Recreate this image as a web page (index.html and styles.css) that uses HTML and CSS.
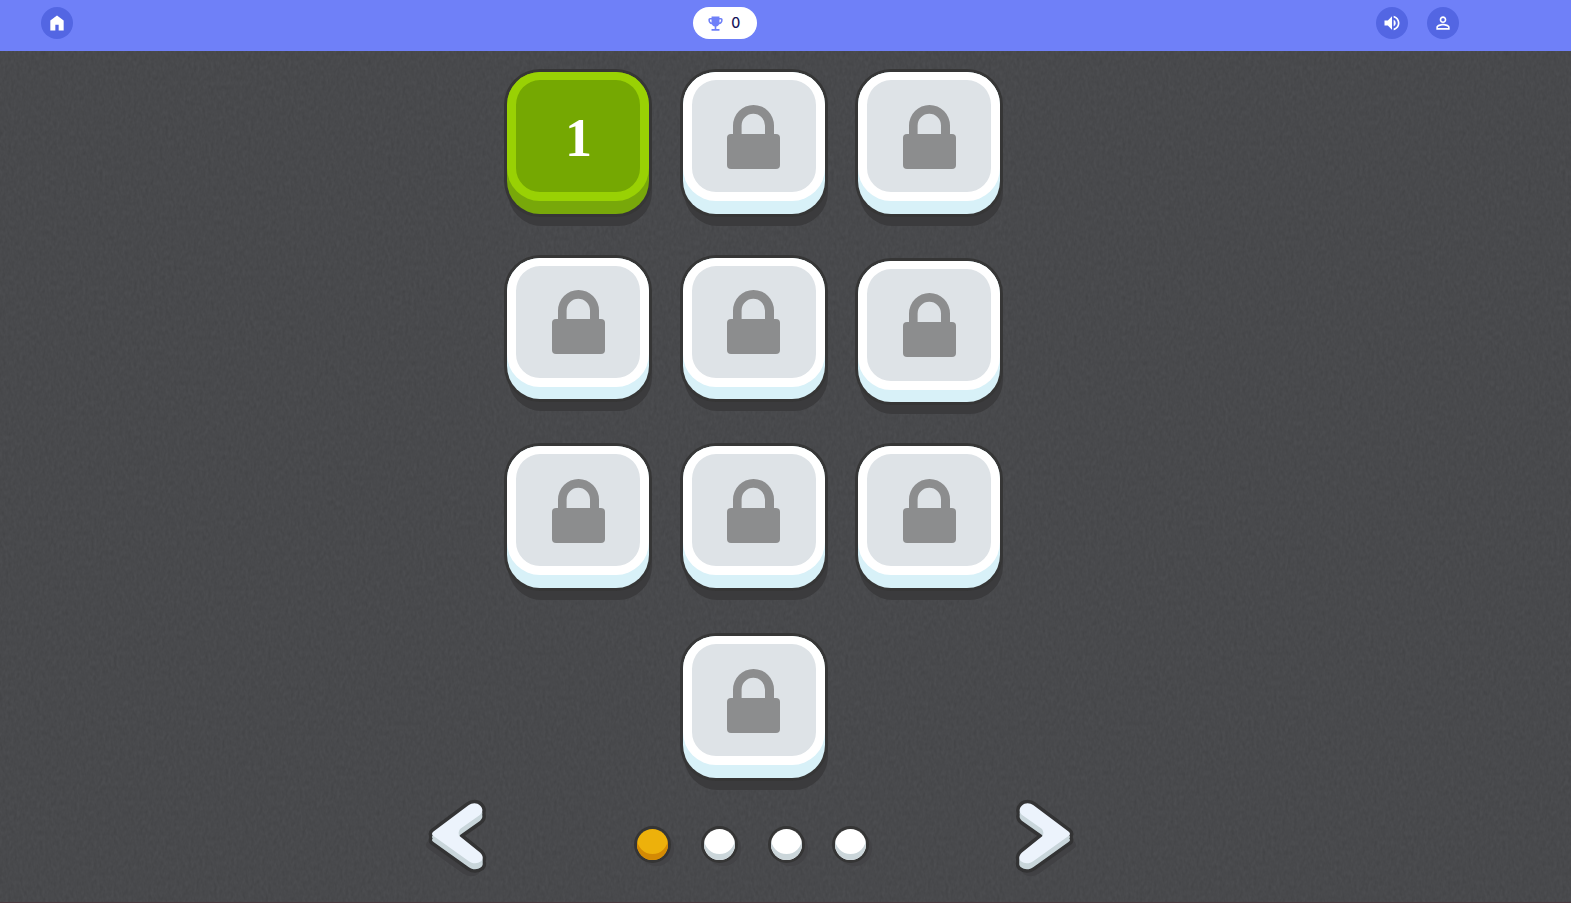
FILE: index.html
```
<!DOCTYPE html>
<html lang="en">
<head>
<meta charset="utf-8">
<title>Levels</title>
<link rel="stylesheet" href="styles.css">
</head>
<body>
<svg class="defs" width="0" height="0" aria-hidden="true">
  <symbol id="lock" viewBox="0 0 53 64">
    <path d="M6 33V20.500a20.500 20.500 0 0 1 41 0V33h-9V20.500a11.700 11.700 0 0 0-23.400 0V33z"/>
    <rect y="29" width="53" height="35" rx="4"/>
  </symbol>
  <path id="chevron" d="M7.500 33.500 42.500 7.300C46 4.700 51 4.500 54 7.500C57.500 11 57 14.500 53.500 17.300L34 31Q31.500 35 33.500 38L54 54.500C57.500 58 57.500 61 55 63.300C51.500 66 46.500 66 42.500 63L7.500 38Q4.500 36 7.500 33.500Z"/>
  <g id="arrow">
    <use class="arrow-shade" href="#chevron" x="-4" y="11"/>
    <use class="arrow-line" href="#chevron"/>
    <use class="arrow-line" href="#chevron" y="6"/>
    <use class="arrow-side" href="#chevron" y="6"/>
    <use class="arrow-side" href="#chevron" y="3"/>
    <use class="arrow-face" href="#chevron"/>
  </g>
</svg>
<header class="topbar">
  <button class="round" aria-label="Home"><svg viewBox="0 0 24 24"><path d="M4 21V9l8-6 8 6v12h-6v-7h-4v7z"/></svg></button>
  <div class="score"><svg viewBox="0 0 24 24"><path d="M7 21v-2h4v-3.100q-1.225-.275-2.187-1.038T7.400 12.950q-1.875-.225-3.137-1.638T3 8V7q0-.825.588-1.412T5 5h2V3h10v2h2q.825 0 1.413.588T21 7v1q0 1.900-1.263 3.313T16.600 12.950q-.45 1.150-1.412 1.913T13 15.900V19h4v2zm0-10.200V7H5v1q0 .95.550 1.713T7 10.800m10 0q.9-.325 1.450-1.088T19 8V7h-2z"/></svg><span>0</span></div>
  <div class="actions">
    <button class="round" aria-label="Sound"><svg viewBox="0 0 24 24"><path d="M3 9v6h4l5 5V4L7 9zm13.500 3A4.500 4.500 0 0 0 14 7.970v8.050c1.480-.730 2.500-2.250 2.500-4.020M14 3.230v2.060c2.890.860 5 3.540 5 6.710s-2.110 5.850-5 6.710v2.060c4.010-.910 7-4.490 7-8.770s-2.990-7.860-7-8.770"/></svg></button>
    <button class="round" aria-label="Profile"><svg viewBox="0 0 24 24"><path d="M12 5.900a2.100 2.100 0 1 1 0 4.200 2.100 2.100 0 0 1 0-4.200m0 9c2.970 0 6.100 1.460 6.100 2.100v1.100H5.900V17c0-.640 3.130-2.100 6.100-2.100M12 4C9.790 4 8 5.790 8 8s1.790 4 4 4 4-1.790 4-4-1.790-4-4-4m0 9c-2.670 0-8 1.340-8 4v3h16v-3c0-2.660-5.330-4-8-4"/></svg></button>
  </div>
</header>
<main class="board">
  <svg class="grain" aria-hidden="true"><filter id="noise" x="0" y="0" width="100%" height="100%"><feTurbulence type="fractalNoise" baseFrequency=".35 .2" numOctaves="2" seed="4"/><feColorMatrix values="0 0 0 0 0  0 0 0 0 0  0 0 0 0 0  .11 .11 0 0 -.06"/></filter><rect width="100%" height="100%" filter="url(#noise)"/></svg>
  <div class="levels">
    <button class="tile open"><span class="face">1</span></button>
    <button class="tile"><span class="face"><svg><use href="#lock"/></svg></span></button>
    <button class="tile"><span class="face"><svg><use href="#lock"/></svg></span></button>
    <button class="tile"><span class="face"><svg><use href="#lock"/></svg></span></button>
    <button class="tile"><span class="face"><svg><use href="#lock"/></svg></span></button>
    <button class="tile lower"><span class="face"><svg><use href="#lock"/></svg></span></button>
    <button class="tile"><span class="face"><svg><use href="#lock"/></svg></span></button>
    <button class="tile"><span class="face"><svg><use href="#lock"/></svg></span></button>
    <button class="tile"><span class="face"><svg><use href="#lock"/></svg></span></button>
    <button class="tile last"><span class="face"><svg><use href="#lock"/></svg></span></button>
  </div>
  <nav class="pager">
    <button class="arrow" aria-label="Previous"><svg viewBox="0 0 60 80"><use href="#arrow"/></svg></button>
    <div class="dots"><i class="dot current"></i><i class="dot"></i><i class="dot"></i><i class="dot"></i></div>
    <button class="arrow next" aria-label="Next"><svg viewBox="0 0 60 80"><use href="#arrow"/></svg></button>
  </nav>
</main>
</body>
</html>
```
FILE: styles.css
```
* { box-sizing: border-box; }
body { margin: 0; height: 903px; overflow: hidden; font-family: Roboto, sans-serif; background: #4a4b4e; }
button { border: 0; padding: 0; font: inherit; }
.defs { position: absolute; }
.topbar { height: 51px; padding: 7px 112px 12px 41px; display: flex; background: #6f80f8; }
.round { width: 32px; height: 32px; border-radius: 50%; background: #5366e3; display: grid; place-items: center; }
.round svg { width: 20px; height: 20px; fill: #fff; }
.score { width: 64px; height: 32px; margin-left: 620px; padding-right: 4px; border-radius: 16px; background: #fff; display: flex; align-items: center; justify-content: center; gap: 6.500px; color: #14145a; font: 500 14px/32px Inter, sans-serif; }
.score svg { width: 19px; height: 19px; fill: #6f80f8; }
.actions { margin-left: auto; display: flex; gap: 19px; }
.board { position: relative; height: 852px; background: #4c4d50; border-bottom: 1px solid #49383e; }
.grain { position: absolute; inset: 0; width: 100%; height: 100%; }
.levels { position: relative; width: 494px; margin-left: 507px; padding-top: 21px; display: grid; grid-template-columns: 142px 142px 142px; column-gap: 33.500px; grid-template-rows: 185.500px 188.500px 190px 142px; }
.tile { width: 142px; height: 141.500px; padding-bottom: 12.500px; border-radius: 33px; background: #d8f1f8; box-shadow: 0 0 0 3px #363636, 2px 11px 0 1px #3b3b3d; }
.face { height: 129px; border: solid #fff; border-width: 8px 9px 9px; border-radius: 33px; background: #dee3e7; display: flex; justify-content: center; padding-top: 24.600px; }
.face svg { width: 53px; height: 64px; fill: #8c8d8e; }
.open { background: #78a80a; }
.open .face { border-color: #99d104; background: #75a802; color: #fff; font: bold 54px/66px "Liberation Serif", serif; padding-left: 1px; }
.lower { margin-top: 3px; }
.last { grid-column: 2; }
.pager { position: relative; margin: 20px 0 0 426px; width: 650px; display: flex; justify-content: space-between; align-items: flex-start; }
.arrow { width: 60px; height: 80px; background: none; }
.arrow svg { width: 60px; height: 80px; overflow: visible; display: block; }
.next { transform: scaleX(-1); }
.arrow-line { fill: #333334; stroke: #333334; stroke-width: 7px; stroke-linejoin: round; }
.arrow-side { fill: #c9d6db; }
.arrow-face { fill: #ecf3fc; }
.arrow-shade { fill: #414144; stroke: #414144; stroke-width: 4px; stroke-linejoin: round; }
.dots { display: flex; gap: 36px; margin-top: 31px; }
.dot { width: 31px; height: 31px; border-radius: 50%; background: #fff; box-shadow: inset 0 -6px #cbd6da, 0 0 0 3px #353535, 4px 4px 0 2px #434346; }
.dot.current { background: #edb10b; box-shadow: inset 0 -6px #d48a04, 0 0 0 3px #353535, 4px 4px 0 2px #434346; }
.dot:last-child { margin-left: -3px; }
```
